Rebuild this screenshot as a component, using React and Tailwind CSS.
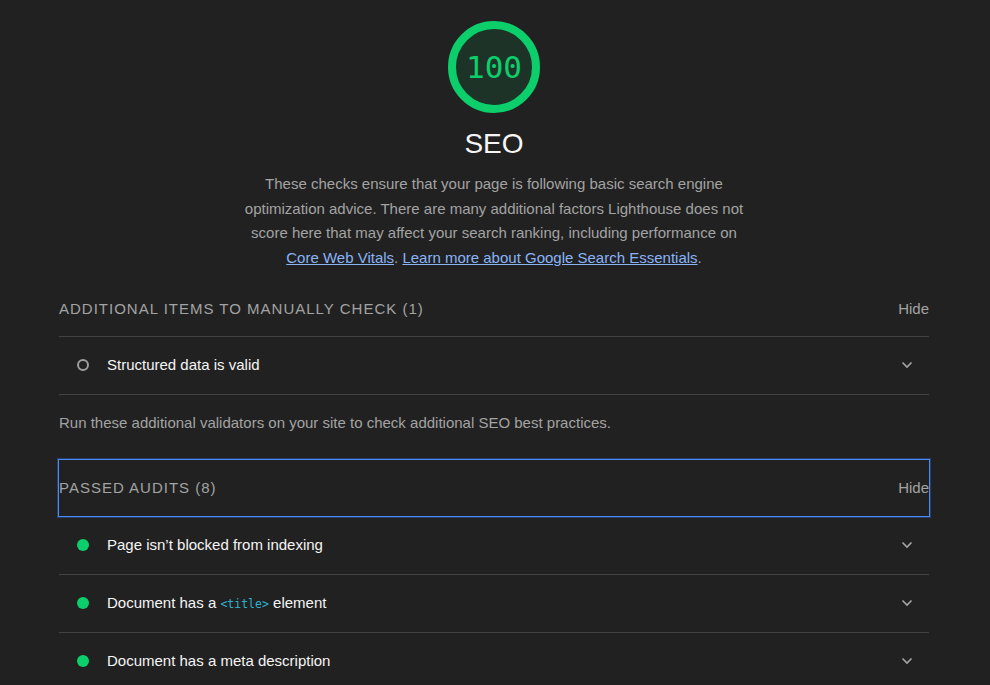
import React from "react";

const Chevron = () => (
  <svg width="12" height="8" viewBox="0 0 12 8" className="shrink-0">
    <path d="M1.5 1.5 L6 6 L10.5 1.5" fill="none" stroke="#a6a6a6" strokeWidth="1.6" />
  </svg>
);

const Row = ({ icon, children }) => (
  <div className="flex h-[58px] items-center border-b border-[#424242]">
    <div className="flex w-[48px] justify-center">
      {icon === "pass" ? (
        <span className="block h-[12px] w-[12px] rounded-full bg-[#0cce6b]" />
      ) : (
        <span className="block h-[12px] w-[12px] rounded-full border-2 border-[#9e9e9e]" />
      )}
    </div>
    <div className="flex-1 text-[15px] text-[#f5f5f5]">{children}</div>
    <div className="flex w-[44px] justify-center">
      <Chevron />
    </div>
  </div>
);

export default function App() {
  return (
    <div
      className="min-h-[685px] w-full bg-[#212121]"
      style={{ fontFamily: '"Liberation Sans", Arial, sans-serif' }}
    >
      <div className="ml-[59px] flex w-[870px] flex-col items-stretch pt-[21px]">
        <div className="flex flex-col items-center">
          <div className="flex h-[92px] w-[92px] items-center justify-center rounded-full border-[8px] border-[#0cce6b] bg-[#1d3327]">
            <span
              className="text-[31px] leading-none text-[#0cce6b]"
              style={{ fontFamily: '"DejaVu Sans Mono", "Liberation Mono", monospace' }}
            >
              100
            </span>
          </div>
          <div className="mt-[15px] text-[28px] leading-[32px] text-[#f5f5f5]">SEO</div>
          <p className="mt-[12px] w-[512px] text-center text-[15px] leading-[24.7px] text-[#a3a3a3]">
            These checks ensure that your page is following basic search engine optimization advice. There are
            many additional factors Lighthouse does not score here that may affect your search ranking, including
            performance on{" "}
            <a className="text-[#8ab4f8] underline">Core Web Vitals</a>.{" "}
            <a className="text-[#8ab4f8] underline">Learn more about Google Search Essentials</a>.
          </p>
        </div>

        <div className="mt-[8px] flex h-[58px] items-center justify-between border-b border-[#424242] pt-[4px] text-[15px] text-[#a3a3a3]">
          <span className="tracking-[1px]">ADDITIONAL ITEMS TO MANUALLY CHECK (1)</span>
          <span>Hide</span>
        </div>
        <Row icon="manual">Structured data is valid</Row>
        <div className="flex h-[56px] items-center text-[15px] text-[#a3a3a3]">
          Run these additional validators on your site to check additional SEO best practices.
        </div>

        <div className="mt-[8px] -mx-[1px] flex h-[58px] items-center justify-between border border-[#4a8af4] text-[15px] text-[#a3a3a3] shadow-[0_0_0_1px_#27406a]">
          <span className="tracking-[1px]">PASSED AUDITS (8)</span>
          <span>Hide</span>
        </div>
        <div>
          <Row icon="pass">Page isn’t blocked from indexing</Row>
          <Row icon="pass">
            Document has a{" "}
            <code
              className="text-[11.5px] text-[#2bb3d0]"
              style={{ fontFamily: '"DejaVu Sans Mono", "Liberation Mono", monospace' }}
            >
              &lt;title&gt;
            </code>{" "}
            element
          </Row>
          <Row icon="pass">Document has a meta description</Row>
        </div>
      </div>
    </div>
  );
}
